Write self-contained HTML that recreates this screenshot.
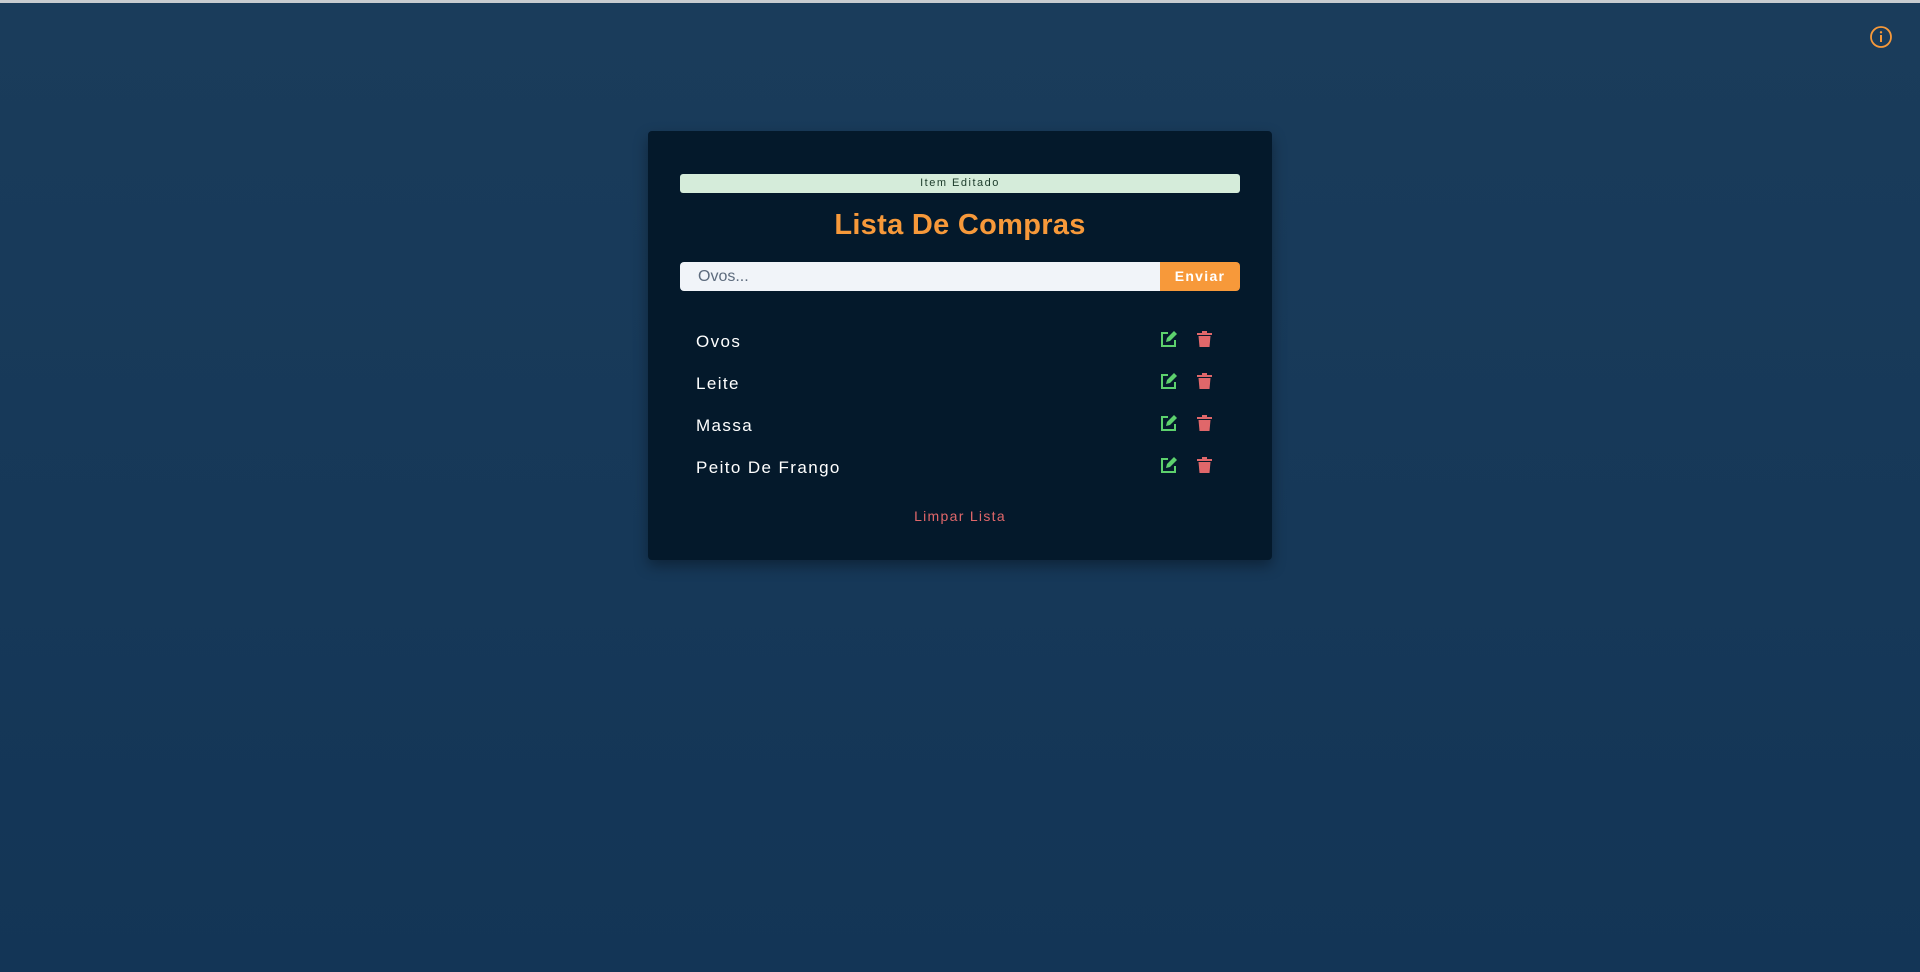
<!DOCTYPE html>
<html><head><meta charset="utf-8"><style>
*{box-sizing:border-box;margin:0;padding:0}
body{width:1920px;height:972px;overflow:hidden;background:linear-gradient(#1a3c5b,#133556);font-family:"Liberation Sans",sans-serif;position:relative}
.line{position:absolute;left:0;top:0;width:1920px;height:3px;background:#c8ccd0}
.card{position:absolute;left:648px;top:131px;width:624px;height:429px;background:#04192b;border-radius:4px;box-shadow:0 6px 14px rgba(0,0,0,.35)}
.alert{position:absolute;left:32px;top:43px;width:560px;height:19px;background:#d5ecda;border-radius:3px;color:#1b3b2a;font-size:11px;letter-spacing:1.5px;text-align:center;line-height:19px}
h1{position:absolute;left:0;right:0;top:78px;text-align:center;color:#f7993a;font-size:29px;letter-spacing:0.3px;font-weight:bold}
.inp{position:absolute;left:32px;top:131px;width:480px;height:29px;background:#f1f4f9;border-radius:4px 0 0 4px;color:#5d6b7d;font-size:16px;line-height:29px;padding-left:18px}
.btn{position:absolute;left:512px;top:131px;width:80px;height:29px;background:#f7993a;border-radius:0 4px 4px 0;color:#fff;font-size:14px;font-weight:bold;letter-spacing:1.3px;text-align:center;line-height:29px}
.item{position:absolute;left:48px;color:#fff;font-size:17px;letter-spacing:1.4px;line-height:20px}
.ic{position:absolute}
.clr{position:absolute;left:0;right:0;top:377px;text-align:center;color:#e0676a;font-size:14px;letter-spacing:1.3px}
</style></head><body>
<div class="line"></div>
<svg style="position:absolute;left:1869px;top:25px" width="24" height="24" viewBox="0 0 24 24"><circle cx="12" cy="12" r="10" fill="none" stroke="#f7993a" stroke-width="1.8"/><rect x="11" y="10" width="2" height="7" fill="#f7993a"/><circle cx="12" cy="7.3" r="1.2" fill="#f7993a"/></svg>
<div class="card">
<div class="alert">Item Editado</div>
<h1>Lista De Compras</h1>
<div class="inp">Ovos...</div>
<div class="btn">Enviar</div>
<div class="item" style="top:201px">Ovos</div>
<div class="item" style="top:243px">Leite</div>
<div class="item" style="top:285px">Massa</div>
<div class="item" style="top:327px">Peito De Frango</div>
<svg class="ic" style="left:512px;top:200px" width="80" height="160" viewBox="0 0 80 160">
<defs>
<g id="e"><path d="M8 1H2v13h13V8" fill="none" stroke="#5dd16d" stroke-width="2"/><path d="M6 10l1-4 7-7 3 3-7 7z" fill="#5dd16d"/></g>
<g id="t"><rect x="0" y="2" width="15" height="2" fill="#e0676a"/><rect x="5" y="0" width="5" height="2" fill="#e0676a"/><path d="M1.5 5h12l-1 11h-10z" fill="#e0676a"/></g>
</defs>
<use href="#e" x="0" y="1"/><use href="#t" x="37" y="0"/>
<use href="#e" x="0" y="43"/><use href="#t" x="37" y="42"/>
<use href="#e" x="0" y="85"/><use href="#t" x="37" y="84"/>
<use href="#e" x="0" y="127"/><use href="#t" x="37" y="126"/>
</svg>
<div class="clr">Limpar Lista</div>
</div>
</body></html>
